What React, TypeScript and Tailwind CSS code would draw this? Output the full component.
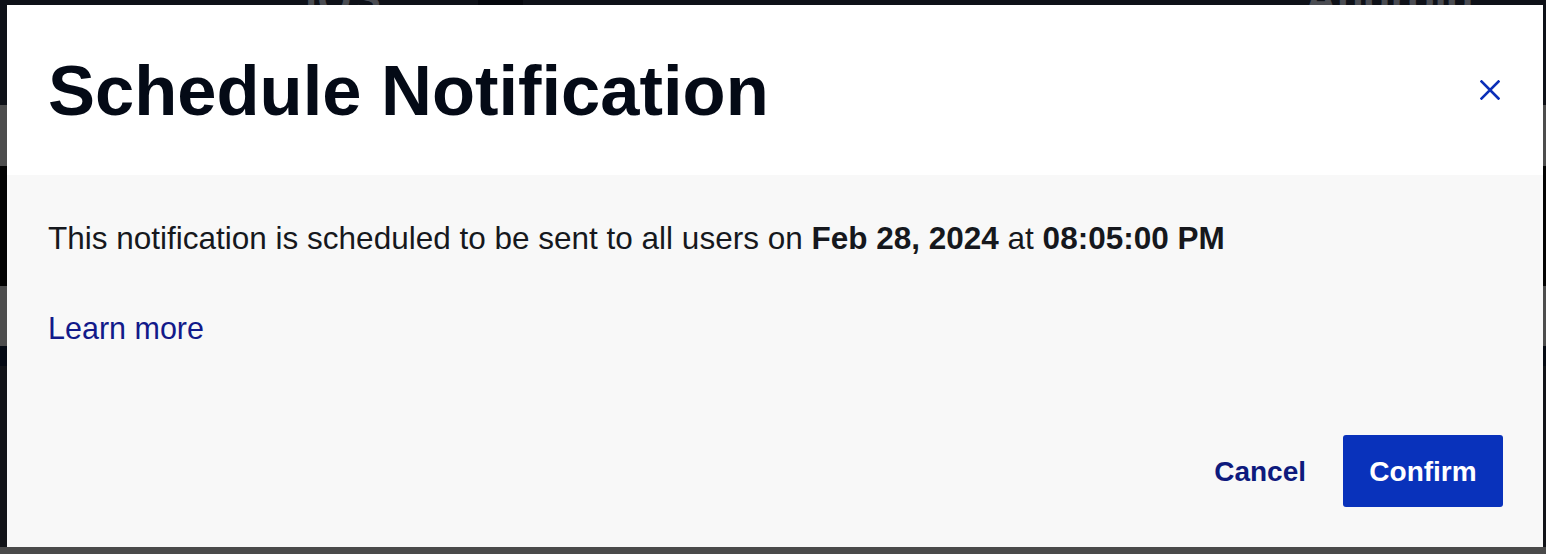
import React from "react";

export default function App() {
  return (
    <div
      className="relative w-[1546px] h-[554px] overflow-hidden bg-[#0e1118]"
      style={{ fontFamily: '"Liberation Sans", Arial, sans-serif' }}
    >
      {/* dimmed page behind the dialog */}
      <div className="flex flex-col w-full h-full">
        <div className="relative h-[105px] bg-[#0e1118]">
          <span className="absolute left-[305px] top-[-34px] text-[44px] font-bold text-[#4a4c52]">iOS</span>
          <div className="absolute left-[478px] top-0 w-[45px] h-[5px] bg-[#05070d]" />
          <span className="absolute left-[1305px] top-[-34px] text-[44px] font-bold text-[#4a4c52]">Android</span>
        </div>
        <div className="h-[61px] bg-[#4d4d4d]" />
        <div className="h-[120px] bg-[#030303]" />
        <div className="h-[60px] bg-[#4d4d4d]" />
        <div className="h-[20px] bg-[#050a14]" />
        <div className="flex-1 bg-[#111318]" />
        <div className="h-[7px] bg-[#4a4a4a]" />
      </div>

      {/* dialog */}
      <div className="absolute left-[7px] top-[5px] w-[1536px] h-[542px] flex flex-col">
        <div className="h-[170px] bg-white flex items-center justify-between pl-[41px] pr-[43px]">
          <h1 className="text-[70.5px] leading-none font-bold text-[#040a16] pt-[3px]">Schedule Notification</h1>
          <button className="w-[20px] h-[20px] flex items-center justify-center">
            <svg width="20" height="20" viewBox="0 0 20 20" fill="none">
              <path d="M1.5 1.5 L18.5 18.5 M18.5 1.5 L1.5 18.5" stroke="#0b2fb8" strokeWidth="2.6" strokeLinecap="square" />
            </svg>
          </button>
        </div>
        <div className="flex-1 bg-[#f8f8f8] flex flex-col pl-[41px] pr-[40px] pt-[40px] pb-[40px]">
          <p className="text-[31.5px] leading-[46px] text-[#16181d]">
            This notification is scheduled to be sent to all users on <span className="font-bold">Feb 28, 2024</span> at{" "}
            <span className="font-bold">08:05:00 PM</span>
          </p>
          <a className="mt-[44px] text-[30.5px] leading-[46px] text-[#121a8a] w-fit">Learn more</a>
          <div className="mt-auto flex justify-end items-center gap-[37px]">
            <button className="text-[28px] font-bold text-[#0e1a7d] pt-[2px]">Cancel</button>
            <button className="w-[160px] h-[72px] rounded-[3px] bg-[#0932bb] text-white text-[28px] font-bold pt-[2px]">Confirm</button>
          </div>
        </div>
      </div>
    </div>
  );
}
